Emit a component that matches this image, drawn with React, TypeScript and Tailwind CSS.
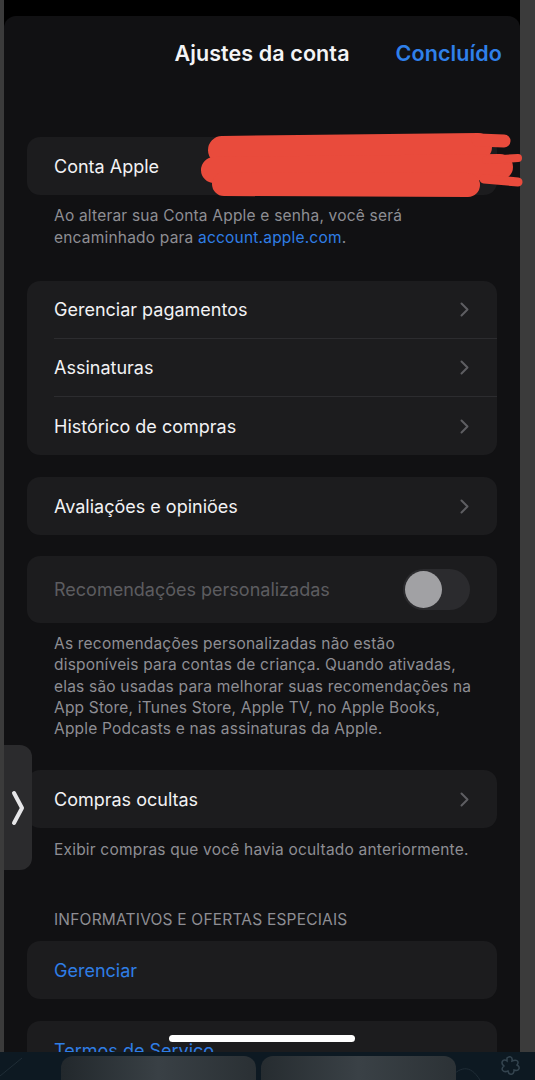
import React from "react";

/**
 * Ajustes da conta — folha modal da App Store em modo escuro.
 */

function Chevron() {
  return (
    <svg width="9" height="15" viewBox="0 0 9 15" fill="none" aria-hidden="true">
      <path
        d="M1.5 1.5l6 6-6 6"
        stroke="#5e5e62"
        strokeWidth="2"
        strokeLinecap="round"
        strokeLinejoin="round"
      />
    </svg>
  );
}

function Row({
  label,
  chevron = true,
  divider = false,
  className = "text-[#f2f2f4]",
}: {
  label: string;
  chevron?: boolean;
  divider?: boolean;
  className?: string;
}) {
  return (
    <div
      className={`ml-[27px] pr-[28px] h-[58px] flex items-center justify-between ${
        divider ? "border-b border-[#2c2c2f]" : ""
      }`}
    >
      <span className={`text-[18px] ${className}`}>{label}</span>
      {chevron && <Chevron />}
    </div>
  );
}

function Footer({ children, className = "" }: { children: React.ReactNode; className?: string }) {
  return (
    <p className={`px-[27px] text-[15.5px] tracking-[0.2px] text-[#8e8e93] whitespace-nowrap ${className}`}>
      {children}
    </p>
  );
}

const card = "bg-[#1c1c1e] rounded-[13px]";

export default function App() {
  return (
    <div className="relative w-[535px] h-[1080px] overflow-hidden flex bg-[#3b3b3b] font-['Inter','Noto_Sans',sans-serif] antialiased">
      <div className="w-[4px] shrink-0" />

      {/* Folha */}
      <div className="w-[516px] shrink-0 flex flex-col bg-black pt-[16px]">
        <div className="flex-1 bg-[#111113] rounded-t-[12px] px-[23px]">
          {/* Cabeçalho */}
          <div className="h-[74px] -mx-[23px] grid grid-cols-[1fr_auto_1fr] items-center">
            <span />
            <h1 className="text-[21.5px] tracking-[0.1px] font-semibold text-[#f4f4f6]">Ajustes da conta</h1>
            <button className="justify-self-end pr-[18px] text-[21.5px] tracking-[0.1px] font-semibold text-[#2f80ea]">
              Concluído
            </button>
          </div>

          {/* Conta Apple */}
          <div className={`${card} mt-[47px]`}>
            <Row label="Conta Apple" chevron={false} />
          </div>
          <Footer className="mt-[10px] leading-[22px]">
            Ao alterar sua Conta Apple e senha, você será
            <br />
            encaminhado para <span className="text-[#2f7ee6]">account.apple.com</span>.
          </Footer>

          {/* Pagamentos */}
          <div className={`${card} mt-[32px]`}>
            <Row label="Gerenciar pagamentos" divider />
            <Row label="Assinaturas" divider />
            <Row label="Histórico de compras" />
          </div>

          <div className={`${card} mt-[22px]`}>
            <Row label="Avaliações e opiniões" />
          </div>

          {/* Recomendações */}
          <div className={`${card} mt-[21px] h-[67px] pl-[27px] pr-[27px] flex items-center justify-between`}>
            <span className="text-[18px] text-[#5c5c60]">Recomendações personalizadas</span>
            <div className="w-[67px] h-[41px] rounded-full bg-[#2b2b2e] p-[2px] flex items-center">
              <div className="w-[37px] h-[37px] rounded-full bg-[#a1a1a4]" />
            </div>
          </div>
          <Footer className="mt-[10px] leading-[21.3px]">
            As recomendações personalizadas não estão
            <br />
            disponíveis para contas de criança. Quando ativadas,
            <br />
            elas são usadas para melhorar suas recomendações na
            <br />
            App Store, iTunes Store, Apple TV, no Apple Books,
            <br />
            Apple Podcasts e nas assinaturas da Apple.
          </Footer>

          {/* Compras ocultas */}
          <div className={`${card} mt-[31px]`}>
            <Row label="Compras ocultas" />
          </div>
          <Footer className="mt-[11px] leading-[22px]">
            Exibir compras que você havia ocultado anteriormente.
          </Footer>

          {/* Informativos */}
          <p className="mt-[49px] px-[27px] text-[15.5px] tracking-[0.2px] leading-[20px] uppercase text-[#8e8e93]">
            Informativos e ofertas especiais
          </p>
          <div className={`${card} mt-[11px]`}>
            <Row label="Gerenciar" chevron={false} className="text-[#2f7ee6]" />
          </div>
          <div className={`${card} mt-[22px]`}>
            <Row label="Termos de Serviço" chevron={false} className="text-[#2f7ee6]" />
          </div>
        </div>
      </div>

      <div className="flex-1" />

      {/* Rabisco vermelho sobre o e-mail */}
      <svg
        className="absolute left-[190px] top-[126px]"
        width="340"
        height="76"
        viewBox="190 126 340 76"
        aria-hidden="true"
      >
        <g stroke="#e94b3c" strokeLinecap="round" fill="none">
          <path d="M222 150 L478 147" strokeWidth="28" />
          <path d="M214 170 L500 167" strokeWidth="26" />
          <path d="M224 184 L468 185" strokeWidth="24" />
          <path d="M478 140 L504 141" strokeWidth="13" />
          <path d="M486 160 L518 158" strokeWidth="8" />
          <path d="M484 179 L518 182" strokeWidth="9" />
        </g>
      </svg>

      {/* Aba lateral */}
      <div className="absolute left-[4px] top-[745px] w-[28px] h-[125px] rounded-r-[12px] bg-[#2b2b2d] flex items-center justify-center">
        <svg width="14" height="36" viewBox="0 0 14 36" fill="none" aria-hidden="true">
          <path
            d="M3 3 L11 18 L3 33"
            stroke="#e6e6e8"
            strokeWidth="4"
            strokeLinecap="round"
            strokeLinejoin="round"
          />
        </svg>
      </div>

      {/* Indicador de início */}
      <div className="absolute left-[169px] top-[1035px] w-[186px] h-[7px] rounded-full bg-white" />

      {/* Dock / papel de parede */}
      <div className="absolute left-0 right-0 bottom-0 h-[28px] bg-[#0d1922] overflow-hidden">
        <svg className="absolute inset-0" width="535" height="28" viewBox="0 0 535 28" fill="none" aria-hidden="true">
          <path d="M0 24 L22 6" stroke="#1f2c36" strokeWidth="1" />
          <path d="M448 28 C460 14 470 12 480 28" stroke="#1f2c36" strokeWidth="1" />
          <path
            d="M507 6 C509 4 513 4 512 9 C516 7 520 9 517 13 C521 15 519 20 514 18 C514 23 509 24 508 19 C503 21 500 17 504 14 C500 11 503 6 507 9 Z"
            stroke="#34444f"
            strokeWidth="1.5"
          />
        </svg>
        <div className="absolute left-[61px] top-[4px] w-[195px] h-[40px] rounded-[12px] bg-gradient-to-r from-[#22282c] via-[#394045] to-[#2a3034]" />
        <div className="absolute left-[261px] top-[4px] w-[195px] h-[40px] rounded-[12px] bg-gradient-to-r from-[#262c30] via-[#3a4146] to-[#2c3236]" />
      </div>
    </div>
  );
}
